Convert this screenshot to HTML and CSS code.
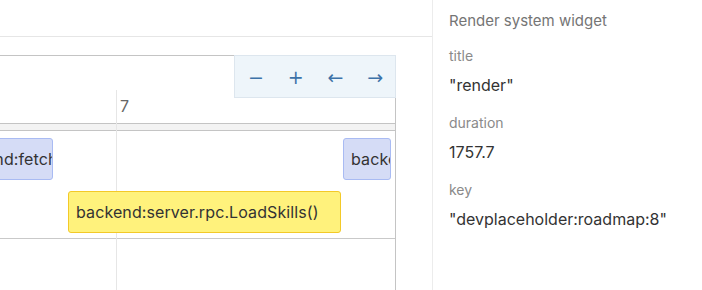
FILE: index.html
```html
<!DOCTYPE html>
<html lang="en">
<head>
    <meta charset="UTF-8">
    <title>Trace view</title>
    <link rel="stylesheet" href="styles.css">
</head>
<body>
    <div class="layout">
        <div class="main">
            <div class="topbar"></div>
            <div class="timeline">
                <div class="ruler">
                    <div class="tick" style="left: 116px;"><span>7</span></div>
                </div>
                <div class="ruler-band"></div>
                <div class="tracks">
                    <div class="span span-blue" style="left: -60px; width: 113px; top: 7px;">backend:fetch</div>
                    <div class="span span-blue" style="left: 343px; width: 48px; top: 7px;">backend</div>
                    <div class="span span-yellow" style="left: 68px; width: 273px; top: 60px;">backend:server.rpc.LoadSkills()</div>
                </div>
                <div class="grid-line" style="left: 116px;"></div>
                <div class="zoom-controls">
                    <button>&minus;</button>
                    <button>+</button>
                    <button>&larr;</button>
                    <button>&rarr;</button>
                </div>
            </div>
        </div>
        <div class="sidebar">
            <h2>Render system widget</h2>
            <div class="field">
                <div class="field-label">title</div>
                <div class="field-value">"render"</div>
            </div>
            <div class="field">
                <div class="field-label">duration</div>
                <div class="field-value">1757.7</div>
            </div>
            <div class="field">
                <div class="field-label">key</div>
                <div class="field-value">"devplaceholder:roadmap:8"</div>
            </div>
        </div>
    </div>
</body>
</html>
```

FILE: styles.css
```css
* {
    margin: 0;
    padding: 0;
    box-sizing: border-box;
}
body {
    font-family: Inter, "Noto Sans", sans-serif;
    background-color: #fff;
    color: #333;
    width: 702px;
    height: 290px;
    overflow: hidden;
}
.layout {
    display: flex;
    height: 290px;
}
.main {
    width: 433px;
    border-right: 1px solid #ececec;
    flex-shrink: 0;
}
.topbar {
    height: 37px;
    border-bottom: 1px solid #e6e6e6;
    margin-bottom: 18px;
}
.timeline {
    position: relative;
    width: 396px;
    height: 235px;
    border-top: 1px solid #c4c4c4;
    border-right: 1px solid #c4c4c4;
}
.ruler {
    position: relative;
    height: 68px;
    border-bottom: 1px solid #c4c4c4;
}
.tick {
    position: absolute;
    top: 0;
}
.tick span {
    position: absolute;
    left: 4px;
    top: 40px;
    font-size: 16px;
    line-height: 20px;
    color: #666;
}
.ruler-band {
    height: 7px;
    background-color: #f3f3f3;
    border-bottom: 1px solid #c4c4c4;
}
.tracks {
    position: relative;
    height: 108px;
    border-bottom: 1px solid #c9c9c9;
    overflow: hidden;
}
.grid-line {
    position: absolute;
    top: 34px;
    bottom: 0;
    width: 1px;
    background-color: #e6e6e6;
}
.span {
    position: absolute;
    z-index: 1;
    height: 42px;
    padding: 0 7px;
    border-radius: 3px;
    font-size: 16px;
    line-height: 40px;
    letter-spacing: 0.1px;
    white-space: nowrap;
    overflow: hidden;
    color: #333;
}
.span-blue {
    background-color: #d5dcf6;
    border: 1px solid #a9bbf3;
}
.span-yellow {
    background-color: #fff27c;
    border: 1px solid #f3c928;
}
.zoom-controls {
    position: absolute;
    top: -1px;
    right: -1px;
    width: 162px;
    height: 43px;
    display: flex;
    align-items: center;
    padding-left: 1px;
    background-color: #eef5fa;
    border: 1px solid #dde6ee;
    z-index: 2;
}
.zoom-controls button {
    border: none;
    background: none;
    font-family: "DejaVu Sans", sans-serif;
    font-size: 19px;
    color: #3d72a8;
    cursor: pointer;
    width: 40px;
}
.sidebar {
    padding: 11px 0 0 16px;
}
.sidebar h2 {
    font-size: 15px;
    font-weight: normal;
    line-height: 20px;
    color: #757575;
    margin-bottom: 15px;
}
.field {
    margin-bottom: 18px;
}
.field-label {
    font-size: 14px;
    line-height: 20px;
    color: #8a8a8a;
    margin-bottom: 9px;
}
.field-value {
    font-size: 16px;
    line-height: 20px;
    color: #333;
}
```
